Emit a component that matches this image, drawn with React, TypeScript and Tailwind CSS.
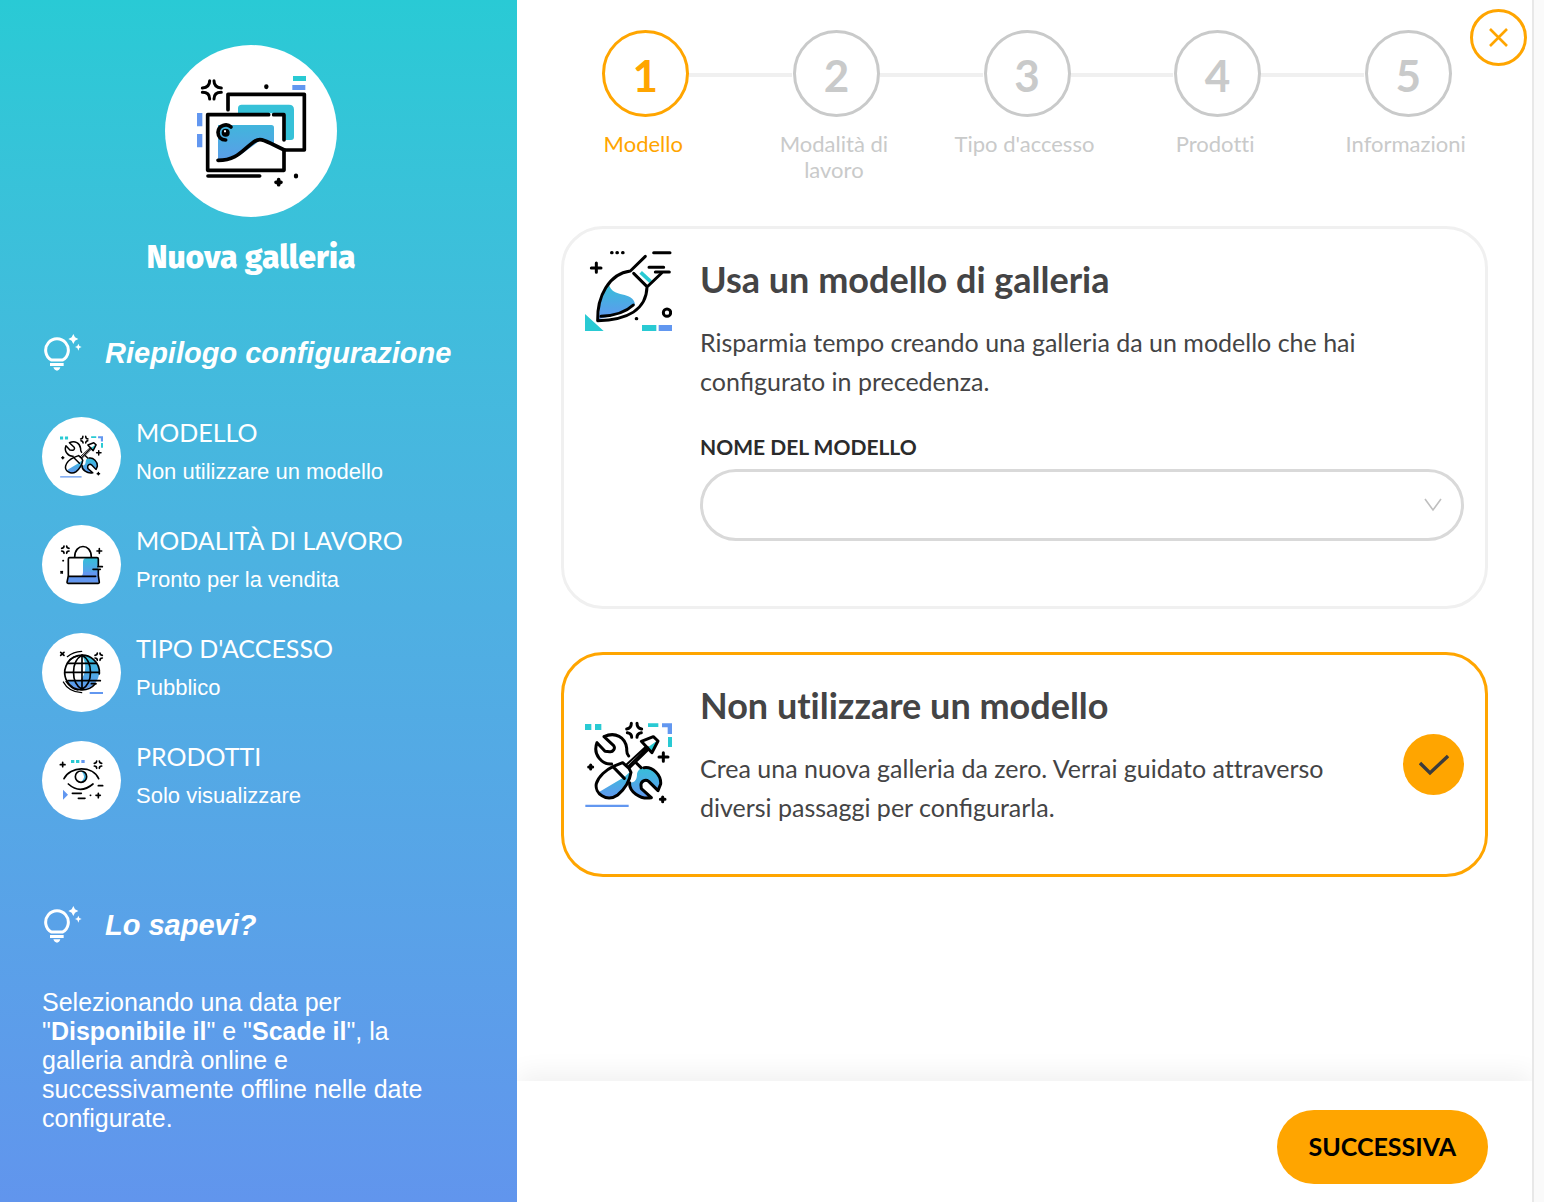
import type { ReactNode } from "react";

const TEAL = "#29cad3";
const BLUE = "#6297f0";

function Gradient({ id }: { id: string }) {
  return (
    <defs>
      <linearGradient id={id} x1="0" y1="0" x2="0" y2="1">
        <stop offset="0" stopColor="#35bfd9" />
        <stop offset="1" stopColor={BLUE} />
      </linearGradient>
    </defs>
  );
}

function GalleryIcon() {
  return (
    <svg viewBox="45 45 516 516" className="size-full" fill="none" stroke="#000" strokeWidth="11" strokeLinecap="round" strokeLinejoin="round" aria-hidden="true">
      <defs>
        <linearGradient id="photo" x1="0" y1="0" x2="0" y2="1">
          <stop offset="0" stopColor="#41b5dc" />
          <stop offset="1" stopColor="#5b9de8" />
        </linearGradient>
      </defs>
      <g stroke="none">
        <path d="M429 138h39v15h-39z" fill={TEAL} />
        <path d="M427 165h39v15h-39zM141 249h16v40h-16zM141 312h16v40h-16z" fill={BLUE} />
        <path d="M264 250v-15q0-11 11-11h142q15 0 15 15v82q0 9-9 9h-17v-80z" fill="#36c1d8" />
        <path d="M204 285h160q8 0 8 8v50l-40-13-62 46-66 15z" fill="url(#photo)" />
      </g>
      <path d="M234 239v-46h229v167h-60" />
      <path d="M356 254H173v167h229v-61M371 254h31v76" />
      <path d="M204 391c58 0 74-32 108-56 20-14 30-4 91 25M174 438h155" />
      <path d="M243 291c-12-12-38-6-39 16 0 14 10 23 23 23" />
      <circle cx="227" cy="308" r="12" fill="#000" stroke="none" />
      <path d="M222 301h6v6h-6z" fill="#fff" stroke="none" />
      <path d="M179 152q0 20-22 22M192 152q0 20 22 22M157 187q22 0 22 20M214 187q-22 0-22 20" strokeWidth="9" />
      <path d="M386 449v15M378 457h15" />
      <path d="M349 169v2M438 437v2" strokeWidth="13" />
    </svg>
  );
}

function BulbIcon() {
  return (
    <svg viewBox="42 42 114 111" className="h-[37px] w-[38px] shrink-0" fill="#fff" aria-hidden="true">
      <path d="M64 120a34 34 0 1 1 34 0z" fill="none" stroke="#fff" strokeWidth="9" strokeLinejoin="round" />
      <path d="M60 129h41v9H60zM70 142h21q-3 10-10 10t-11-10z" />
      <path d="M130 42l5 10 10 5-10 5-5 10-5-10-10-5 10-5zM145 71l3 7 7 3-7 3-3 8-3-8-7-3 7-3z" />
    </svg>
  );
}

function ToolsIcon({ id, className }: { id: string; className: string }) {
  return (
    <svg viewBox="45 48 261 261" className={className} fill="none" stroke="#000" strokeWidth="9" strokeLinecap="round" strokeLinejoin="round" aria-hidden="true">
      <Gradient id={id} />
      <g stroke="none">
        <path d="M45 57h19v18H45zM75 57h19v18H75zM234 55h31v11h-31zM294 96h12v30h-12z" fill={TEAL} />
        <path d="M276 55h30v32h-13V67h-17zM46 299h130v7H46z" fill={BLUE} />
        <path d="M86 262l76-45 20-18-12 42-28 34-34 4z" fill={`url(#${id})`} />
        <path d="M222 188c26-4 52 22 50 49l-8 20-28-28-22 4-2 18 30 27c-30 6-60-10-63-45 18 0 22-12 22-26 2-12 10-18 21-19z" fill={`url(#${id})`} />
        <path d="M247 142l18-38-30 22z" fill={TEAL} />
      </g>
      <path d="M102 95c34-16 64 2 68 34 1 10-2 16 6 24M102 95l29 27c6 8-2 20-12 18l-14-1-24-26c-14 36 16 66 44 64" />
      <path d="M158 173l19 17 6 12c-4 26-18 50-40 68-34 24-70-6-64-34 6-22 30-42 51-52zM131 187l32 33" />
      <path d="M168 180l61-56M179 189l56-55M174 185l60-58" strokeWidth="6" />
      <path d="M214 109l36-14 14 13-18 35z" />
      <path d="M199 174l14 14M222 188c26-4 52 22 50 49l-8 20-28-28c-10-8-24 0-23 12l1 10 30 27c-34 7-68-20-65-45" />
      <path d="M184 55q0 15-14 17M201 55q0 15 14 17M172 83q13 2 13 14M214 83q-13 2-13 14" />
      <path d="M280 143v26M267 156h27" />
      <path d="M62 180v12M56 186h12M278 276v14M271 283h14" />
    </svg>
  );
}

function BrushIcon() {
  return (
    <svg viewBox="45 30 261 261" className="size-[87px] shrink-0" fill="none" stroke="#000" strokeWidth="9" strokeLinecap="round" strokeLinejoin="round" aria-hidden="true">
      <Gradient id="paint" />
      <g stroke="none">
        <path d="M45 237l56 51H45zM216 270h43v18h-43z" fill={TEAL} />
        <path d="M266 270h40v18h-40z" fill={BLUE} />
        <path d="M117 148c8 42 74 20 78 60-18 20-50 32-108 44 0-40 8-76 30-104z" fill="url(#paint)" />
      </g>
      <path d="M212 112l30 28" stroke={TEAL} strokeWidth="11" strokeLinecap="butt" />
      <path d="M226 64l-45 44c-64 8-100 76-98 149 90-2 146-34 148-101l44-42M191 115l40 40" />
      <path d="M93 244c40-2 76-14 97-34" />
      <path d="M251 53h49M237 97h44M256 111h42M64 99h29M79 84v28" />
      <path d="M125 53h1M141 53h1M158 53h1M199 251h1" strokeWidth="10" />
      <circle cx="291" cy="233" r="11" />
    </svg>
  );
}

function Spark({ x, y }: { x: number; y: number }) {
  return (
    <g transform={`translate(${x} ${y})`}>
      <path d="M-4-11q0 6-7 7M4-11q0 6 7 7M-11 4q7 0 7 7M11 4q-7 0-7 7" />
    </g>
  );
}

function BagIcon() {
  return (
    <svg viewBox="36 360 237 237" className="size-full" fill="none" stroke="#000" strokeWidth="5" strokeLinecap="round" strokeLinejoin="round" aria-hidden="true">
      <Gradient id="bag" />
      <g stroke="none">
        <path d="M169 459h36v55h-46v-42q0-13 10-13z" fill="url(#bag)" />
        <path d="M115 515h35q9-2 9-14h46l3 32h-96z" fill={BLUE} />
      </g>
      <path d="M134 456c0-42 50-42 50 0M115 512v-50q0-4 4-4h82q4 0 4 4v20M205 496v16l3 20q0 3-3 3h-91q-3 0-3-3l4-20M115 514h82" />
      <path d="M204 485h13M189 493h22M208 431v14M201 438h14" />
      <path d="M93 500l4 4M97 500l-4 4M99 467h1" />
      <Spark x={106} y={434} />
    </svg>
  );
}

function GlobeIcon() {
  return (
    <svg viewBox="36 39 237 237" className="size-full" fill="none" stroke="#000" strokeWidth="5" strokeLinecap="round" strokeLinejoin="round" aria-hidden="true">
      <Gradient id="globe" />
      <g stroke="none">
        <path d="M156 106c70 4 68 98 0 102-20 0-36-12-42-26h36c20-20 20-52 6-76z" fill="url(#globe)" />
        <path d="M179 216h40v6h-40z" fill={BLUE} />
      </g>
      <path d="M208 162a52 52 0 1 0-12 29M108 178q-4-9-4-21" />
      <path d="M156 105v103M156 105c-34 20-34 84 0 103M156 105c34 20 34 84 0 103" />
      <path d="M112 130h88M104 157h104M114 182h97M184 191h14" />
      <path d="M112 110q18-15 43-16M120 119q10-9 22-11M100 186q16 30 55 32M108 184q14 22 36 26" strokeWidth="4" />
      <path d="M92 97l10 9M102 97l-10 9" />
      <Spark x={206} y={110} />
    </svg>
  );
}

function EyeIcon() {
  return (
    <svg viewBox="36 363 237 237" className="size-full" fill="none" stroke="#000" strokeWidth="5" strokeLinecap="round" strokeLinejoin="round" aria-hidden="true">
      <g stroke="none">
        <path d="M123 420h10v9h-10zM138 420h10v9h-10z" fill={TEAL} />
        <path d="M154 420h10v9h-10zM99 509l15 15-15 15z" fill={BLUE} />
        <path d="M153 453q18 0 17 17 0 17-17 17 18-17 0-34z" fill="#45b3e0" />
      </g>
      <circle cx="153" cy="470" r="17" />
      <path d="M102 476c18-38 86-40 104 0M115 492q36 32 74 0" />
      <path d="M205 497h13M127 520h27M145 535h20M181 526h1M205 520v13M198 526h13M98 427v13M91 434h14" />
      <Spark x={204} y={434} />
    </svg>
  );
}

const summary: { title: string; value: string; icon: ReactNode }[] = [
  { title: "MODELLO", value: "Non utilizzare un modello", icon: <ToolsIcon id="tools-small" className="size-[43px]" /> },
  { title: "MODALITÀ DI LAVORO", value: "Pronto per la vendita", icon: <BagIcon /> },
  { title: "TIPO D'ACCESSO", value: "Pubblico", icon: <GlobeIcon /> },
  { title: "PRODOTTI", value: "Solo visualizzare", icon: <EyeIcon /> },
];

const steps = ["Modello", "Modalità di lavoro", "Tipo d'accesso", "Prodotti", "Informazioni"];

function SectionTitle({ children }: { children: ReactNode }) {
  return (
    <div className="flex items-center gap-[23px] pl-0.5">
      <BulbIcon />
      <h2 className="text-[29px] leading-9 font-bold italic">{children}</h2>
    </div>
  );
}

function Sidebar() {
  return (
    <aside className="w-[517px] shrink-0 bg-linear-to-b from-[#29cad5] to-[#6195ed] pt-[45px] pr-[57px] pb-8 pl-[42px] font-['Liberation_Sans',Arial,sans-serif] text-white">
      <div className="mx-auto size-[172px] rounded-full bg-white">
        <GalleryIcon />
      </div>
      <h1 className="mt-5 mb-[57px] text-center font-['Fira_Sans','Noto_Sans',sans-serif] text-[32px] leading-10 font-extrabold">
        Nuova galleria
      </h1>
      <SectionTitle>Riepilogo configurazione</SectionTitle>
      <ul className="mt-[46px] mb-[86px] flex flex-col gap-[29px]">
        {summary.map((item) => (
          <li key={item.title} className="flex h-[79px] gap-[15px]">
            <span className="flex size-[79px] shrink-0 items-center justify-center rounded-full bg-white">{item.icon}</span>
            <div>
              <h3 className="font-[Lato,sans-serif] text-[25px] leading-[30px]">{item.title}</h3>
              <p className="mt-2.5 text-[22px] leading-[30px]">{item.value}</p>
            </div>
          </li>
        ))}
      </ul>
      <SectionTitle>Lo sapevi?</SectionTitle>
      <p className="mt-[45px] text-[25px] leading-[29px]">
        Selezionando una data per "<b>Disponibile il</b>" e "<b>Scade il</b>", la galleria andrà online e successivamente offline nelle date
        configurate.
      </p>
    </aside>
  );
}

function Stepper() {
  return (
    <ol className="grid grid-cols-5 pt-[30px] pr-[29px] pl-[33px]">
      {steps.map((label, i) => (
        <li key={label} className={i === 0 ? "text-[#ffa500]" : "text-[#c9caca]"}>
          <div className="flex items-center">
            <span className={i === 0 ? "h-1 flex-1" : "mt-0.5 mr-px h-1 flex-1 bg-[#f0f0f0]"} />
            <span className="flex size-[87px] items-center justify-center rounded-full border-3 border-current pt-0.5 text-[44px] leading-none font-bold">
              {i + 1}
            </span>
            <span className={i === steps.length - 1 ? "h-1 flex-1" : "mt-0.5 h-1 flex-1 bg-[#f0f0f0]"} />
          </div>
          <p className="mt-3.5 pr-5 pl-4 text-center text-[22px] leading-[26px] [font-variant-ligatures:none]">{label}</p>
        </li>
      ))}
    </ol>
  );
}

export default function App() {
  return (
    <div className="flex min-h-screen bg-[#fafafa] font-[Lato,sans-serif]">
      <Sidebar />
      <main className="relative mr-2.5 flex flex-1 flex-col overflow-hidden border-r-2 border-[#e8e8e8] bg-white text-[#444445]">
        <button
          type="button"
          aria-label="Chiudi"
          className="absolute top-[9px] right-[5px] flex size-[57px] items-center justify-center rounded-full border-3 border-[#ffa500]"
        >
          <svg viewBox="0 0 19 19" className="size-[19px]" stroke="#ffa500" strokeWidth="2.6" aria-hidden="true">
            <path d="M1 1l17 17M18 1L1 18" />
          </svg>
        </button>
        <Stepper />
        <div className="mt-[43px] flex flex-1 flex-col gap-[43px] px-11">
          <section className="flex items-start gap-7 rounded-[42px] border-3 border-[#f0f0f0] px-[21px] pt-[27px] pb-[65px]">
            <div className="-mt-[11px] shrink-0">
              <BrushIcon />
            </div>
            <div className="flex-1">
              <h2 className="text-[36px] leading-[46px] font-bold">Usa un modello di galleria</h2>
              <p className="mt-[21px] text-[25px] leading-[39px]">
                Risparmia tempo creando una galleria da un modello che hai configurato in precedenza.
              </p>
              <label htmlFor="template" className="mt-[29px] block text-[21px] leading-[33px] font-bold text-[#2b2b2b]">
                NOME DEL MODELLO
              </label>
              <div className="relative mt-1.5">
                <select id="template" className="block h-[72px] w-full appearance-none rounded-full border-3 border-[#d9d9d9] bg-white px-8 text-[25px]">
                  <option value=""></option>
                </select>
                <svg viewBox="0 0 18 14" className="pointer-events-none absolute top-[29px] right-[22px] h-3.5 w-[18px]" fill="none" stroke="#bfbfbf" strokeWidth="1.6" aria-hidden="true">
                  <path d="M1 1l8 11 8-11" />
                </svg>
              </div>
            </div>
          </section>
          <section className="flex gap-7 rounded-[42px] border-3 border-[#ffa500] px-[21px] pt-[27px] pb-[47px]">
            <div className="-mb-5 flex shrink-0 items-center">
              <ToolsIcon id="tools-large" className="size-[87px]" />
            </div>
            <div className="flex-1">
              <h2 className="text-[36px] leading-[46px] font-bold [font-variant-ligatures:none]">Non utilizzare un modello</h2>
              <p className="mt-[21px] text-[25px] leading-[39px]">
                Crea una nuova galleria da zero. Verrai guidato <span className="[font-variant-ligatures:none]">attraverso</span> diversi
                passaggi per configurarla.
              </p>
            </div>
            <div className="-mb-5 flex shrink-0 items-center">
              <span className="flex size-[61px] items-center justify-center rounded-full bg-[#ffa500]">
                <svg viewBox="0 0 30 22" className="h-[22px] w-[30px]" fill="none" stroke="#3c3c3d" strokeWidth="3.4" aria-hidden="true">
                  <path d="M1 9l10 10L29 2" />
                </svg>
              </span>
            </div>
          </section>
        </div>
        <footer className="flex justify-end bg-white px-11 pt-[29px] pb-[18px] shadow-[0_-8px_24px_rgba(0,0,0,0.06)]">
          <button type="button" className="h-[74px] rounded-full bg-[#ffa500] px-8 text-[25px] font-bold text-black">
            SUCCESSIVA
          </button>
        </footer>
      </main>
    </div>
  );
}
